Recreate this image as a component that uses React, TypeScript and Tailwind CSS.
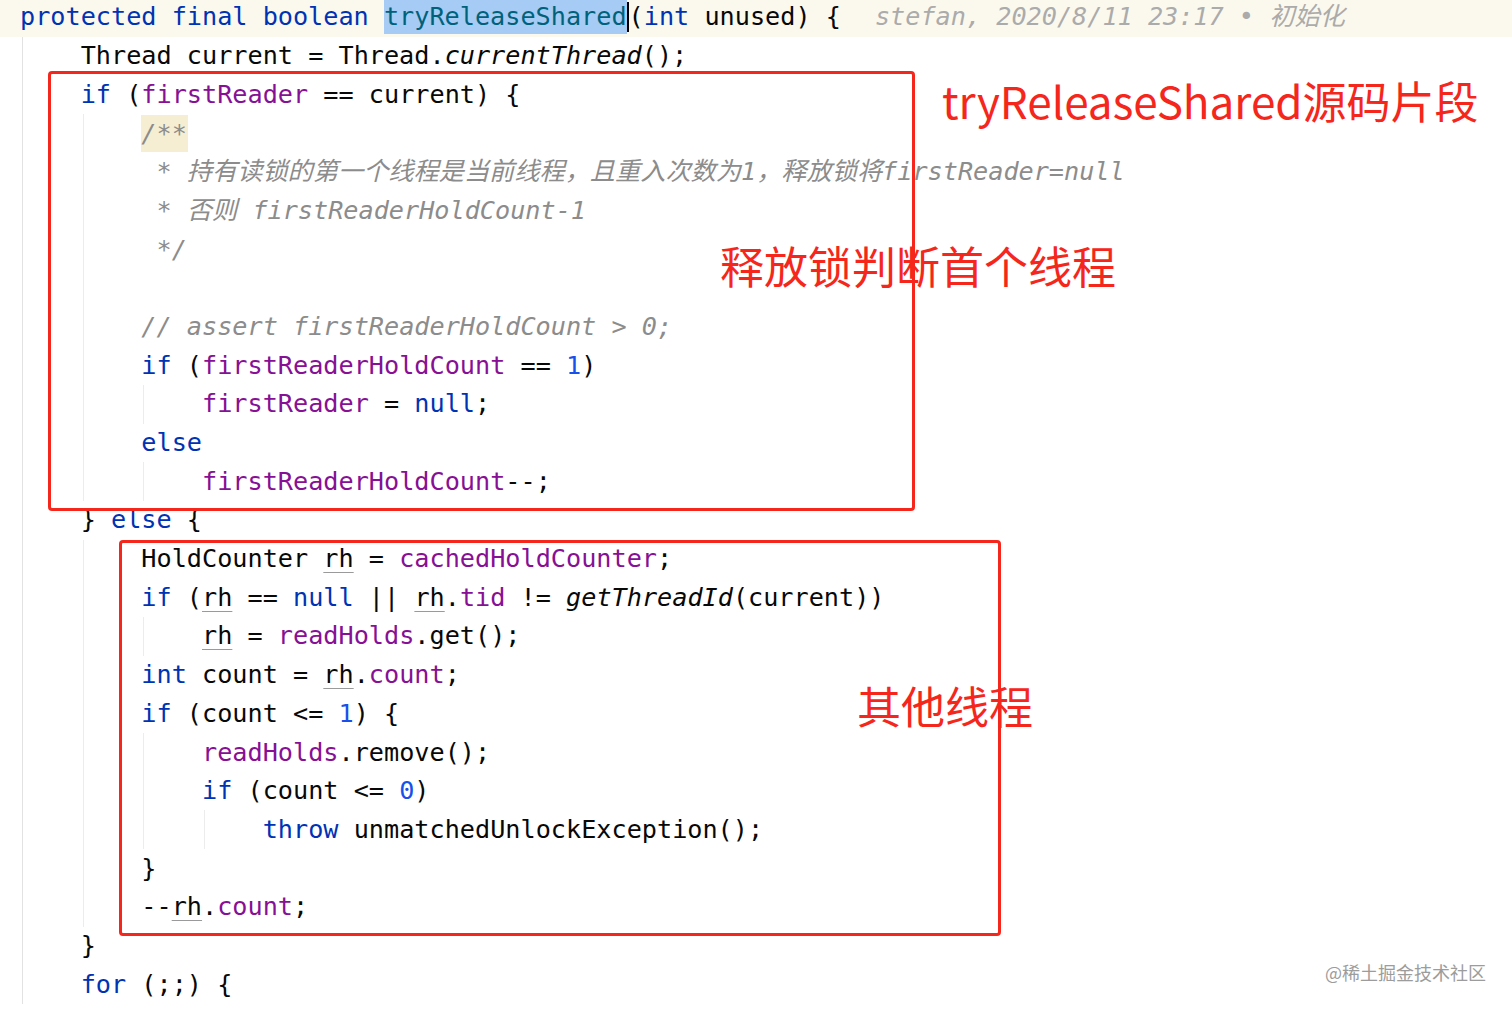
import React from "react";

type Kind = "p" | "k" | "f" | "n" | "c" | "i" | "m" | "u";
type Tok = [string, Kind?];

type Line = {
  indent: number;
  guides: number[];
  toks: Tok[];
};

const kindClass: Record<Kind, string> = {
  p: "text-[#080808]",
  k: "text-[#0033b3]",
  f: "text-[#871094]",
  n: "text-[#1750eb]",
  c: "text-[#8c8c8c] italic",
  i: "text-[#080808] italic",
  m: "text-[#00627a]",
  u: "text-[#080808] underline decoration-[#9a9a9a] decoration-1 underline-offset-[5px]",
};

const lines: Line[] = [
  { indent: 1, guides: [0], toks: [["Thread current = Thread."], ["currentThread", "i"], ["();"]] },
  { indent: 1, guides: [0], toks: [["if ", "k"], ["("], ["firstReader", "f"], [" == current) {"]] },
  { indent: 2, guides: [0, 1], toks: [["/**", "c"]] },
  { indent: 2, guides: [0, 1], toks: [[" * 持有读锁的第一个线程是当前线程，且重入次数为1，释放锁将firstReader=null", "c"]] },
  { indent: 2, guides: [0, 1], toks: [[" * 否则 firstReaderHoldCount-1", "c"]] },
  { indent: 2, guides: [0, 1], toks: [[" */", "c"]] },
  { indent: 2, guides: [0, 1], toks: [] },
  { indent: 2, guides: [0, 1], toks: [["// assert firstReaderHoldCount > 0;", "c"]] },
  { indent: 2, guides: [0, 1], toks: [["if ", "k"], ["("], ["firstReaderHoldCount", "f"], [" == "], ["1", "n"], [")"]] },
  { indent: 3, guides: [0, 1, 2], toks: [["firstReader", "f"], [" = "], ["null", "k"], [";"]] },
  { indent: 2, guides: [0, 1], toks: [["else", "k"]] },
  { indent: 3, guides: [0, 1, 2], toks: [["firstReaderHoldCount", "f"], ["--;"]] },
  { indent: 1, guides: [0], toks: [["} "], ["else", "k"], [" {"]] },
  { indent: 2, guides: [0, 1], toks: [["HoldCounter "], ["rh", "u"], [" = "], ["cachedHoldCounter", "f"], [";"]] },
  {
    indent: 2,
    guides: [0, 1],
    toks: [["if ", "k"], ["("], ["rh", "u"], [" == "], ["null", "k"], [" || "], ["rh", "u"], ["."], ["tid", "f"], [" != "], ["getThreadId", "i"], ["(current))"]],
  },
  { indent: 3, guides: [0, 1, 2], toks: [["rh", "u"], [" = "], ["readHolds", "f"], [".get();"]] },
  { indent: 2, guides: [0, 1], toks: [["int", "k"], [" count = "], ["rh", "u"], ["."], ["count", "f"], [";"]] },
  { indent: 2, guides: [0, 1], toks: [["if ", "k"], ["(count <= "], ["1", "n"], [") {"]] },
  { indent: 3, guides: [0, 1, 2], toks: [["readHolds", "f"], [".remove();"]] },
  { indent: 3, guides: [0, 1, 2], toks: [["if ", "k"], ["(count <= "], ["0", "n"], [")"]] },
  { indent: 4, guides: [0, 1, 2, 3], toks: [["throw", "k"], [" unmatchedUnlockException();"]] },
  { indent: 2, guides: [0, 1], toks: [["}"]] },
  { indent: 2, guides: [0, 1], toks: [["--"], ["rh", "u"], ["."], ["count", "f"], [";"]] },
  { indent: 1, guides: [0], toks: [["}"]] },
  { indent: 1, guides: [0], toks: [["for", "k"], [" (;;) {"]] },
];

function CodeLine({ line, idx }: { line: Line; idx: number }) {
  const cols = Array.from({ length: line.indent }, (_, i) => i);
  return (
    <div className="flex h-[38.7px] items-center whitespace-pre pl-[20px]">
      {cols.map((c) => (
        <span key={c} className="flex h-full w-[60.68px] shrink-0">
          {line.guides.includes(c) && (
            <span
              className={
                c === 0
                  ? "ml-[2px] h-full border-l border-[#e2e2e2]"
                  : "ml-[2px] h-full border-l border-[#ececec]"
              }
            />
          )}
        </span>
      ))}
      {line.toks.map(([t, k], j) =>
        idx === 2 && j === 0 ? (
          <span key={j} className="flex h-[37px] items-center bg-[#f6eed3] pr-[1px] text-[#8c8c8c] italic">
            {t}
          </span>
        ) : (
          <span key={j} className={kindClass[k ?? "p"]}>
            {t}
          </span>
        )
      )}
    </div>
  );
}

export default function App() {
  return (
    <div
      className="relative h-[1009px] w-[1512px] overflow-hidden bg-white text-[25.2px]"
      style={{ fontFamily: '"DejaVu Sans Mono", "Noto Sans CJK SC", monospace' }}
    >
      <div className="-mt-[2px] flex flex-col">
        <div className="flex h-[38.7px] items-center whitespace-pre bg-[#fbf9ee] pl-[20px]">
          <span className="text-[#0033b3]">protected final boolean </span>
          <span className="flex h-[34px] items-center bg-[#a6cbf5] text-[#00627a]">tryReleaseShared</span>
          <span className="h-[30px] w-[2px] bg-black" />
          <span className="text-[#080808]">(</span>
          <span className="text-[#0033b3]">int</span>
          <span className="text-[#080808]"> unused) {"{"}</span>
          <span className="ml-[34px] italic text-[#ababab]">stefan, 2020/8/11 23:17 • 初始化</span>
        </div>
        {lines.map((l, i) => (
          <CodeLine key={i} line={l} idx={i} />
        ))}
      </div>

      {/* annotation boxes */}
      <div className="absolute left-[48px] top-[71px] h-[440px] w-[867px] rounded-[4px] border-[3px] border-[#f5271c]" />
      <div className="absolute left-[119px] top-[540px] h-[396px] w-[882px] rounded-[4px] border-[3px] border-[#f5271c]" />

      <div
        className="absolute left-[942px] top-[74px] text-[44px] leading-[52px] text-[#f5271c]"
        style={{ fontFamily: '"Noto Sans CJK SC", sans-serif' }}
      >
        tryReleaseShared源码片段
      </div>
      <div
        className="absolute left-[720px] top-[239px] text-[44px] leading-[52px] text-[#f5271c]"
        style={{ fontFamily: '"Noto Sans CJK SC", sans-serif' }}
      >
        释放锁判断首个线程
      </div>
      <div
        className="absolute left-[857px] top-[679px] text-[44px] leading-[52px] text-[#f5271c]"
        style={{ fontFamily: '"Noto Sans CJK SC", sans-serif' }}
      >
        其他线程
      </div>
      <div
        className="absolute left-[1325px] top-[960px] text-[18px] leading-[24px] text-[#9c9c9c]"
        style={{ fontFamily: '"Noto Sans CJK SC", sans-serif' }}
      >
        @稀土掘金技术社区
      </div>
    </div>
  );
}
